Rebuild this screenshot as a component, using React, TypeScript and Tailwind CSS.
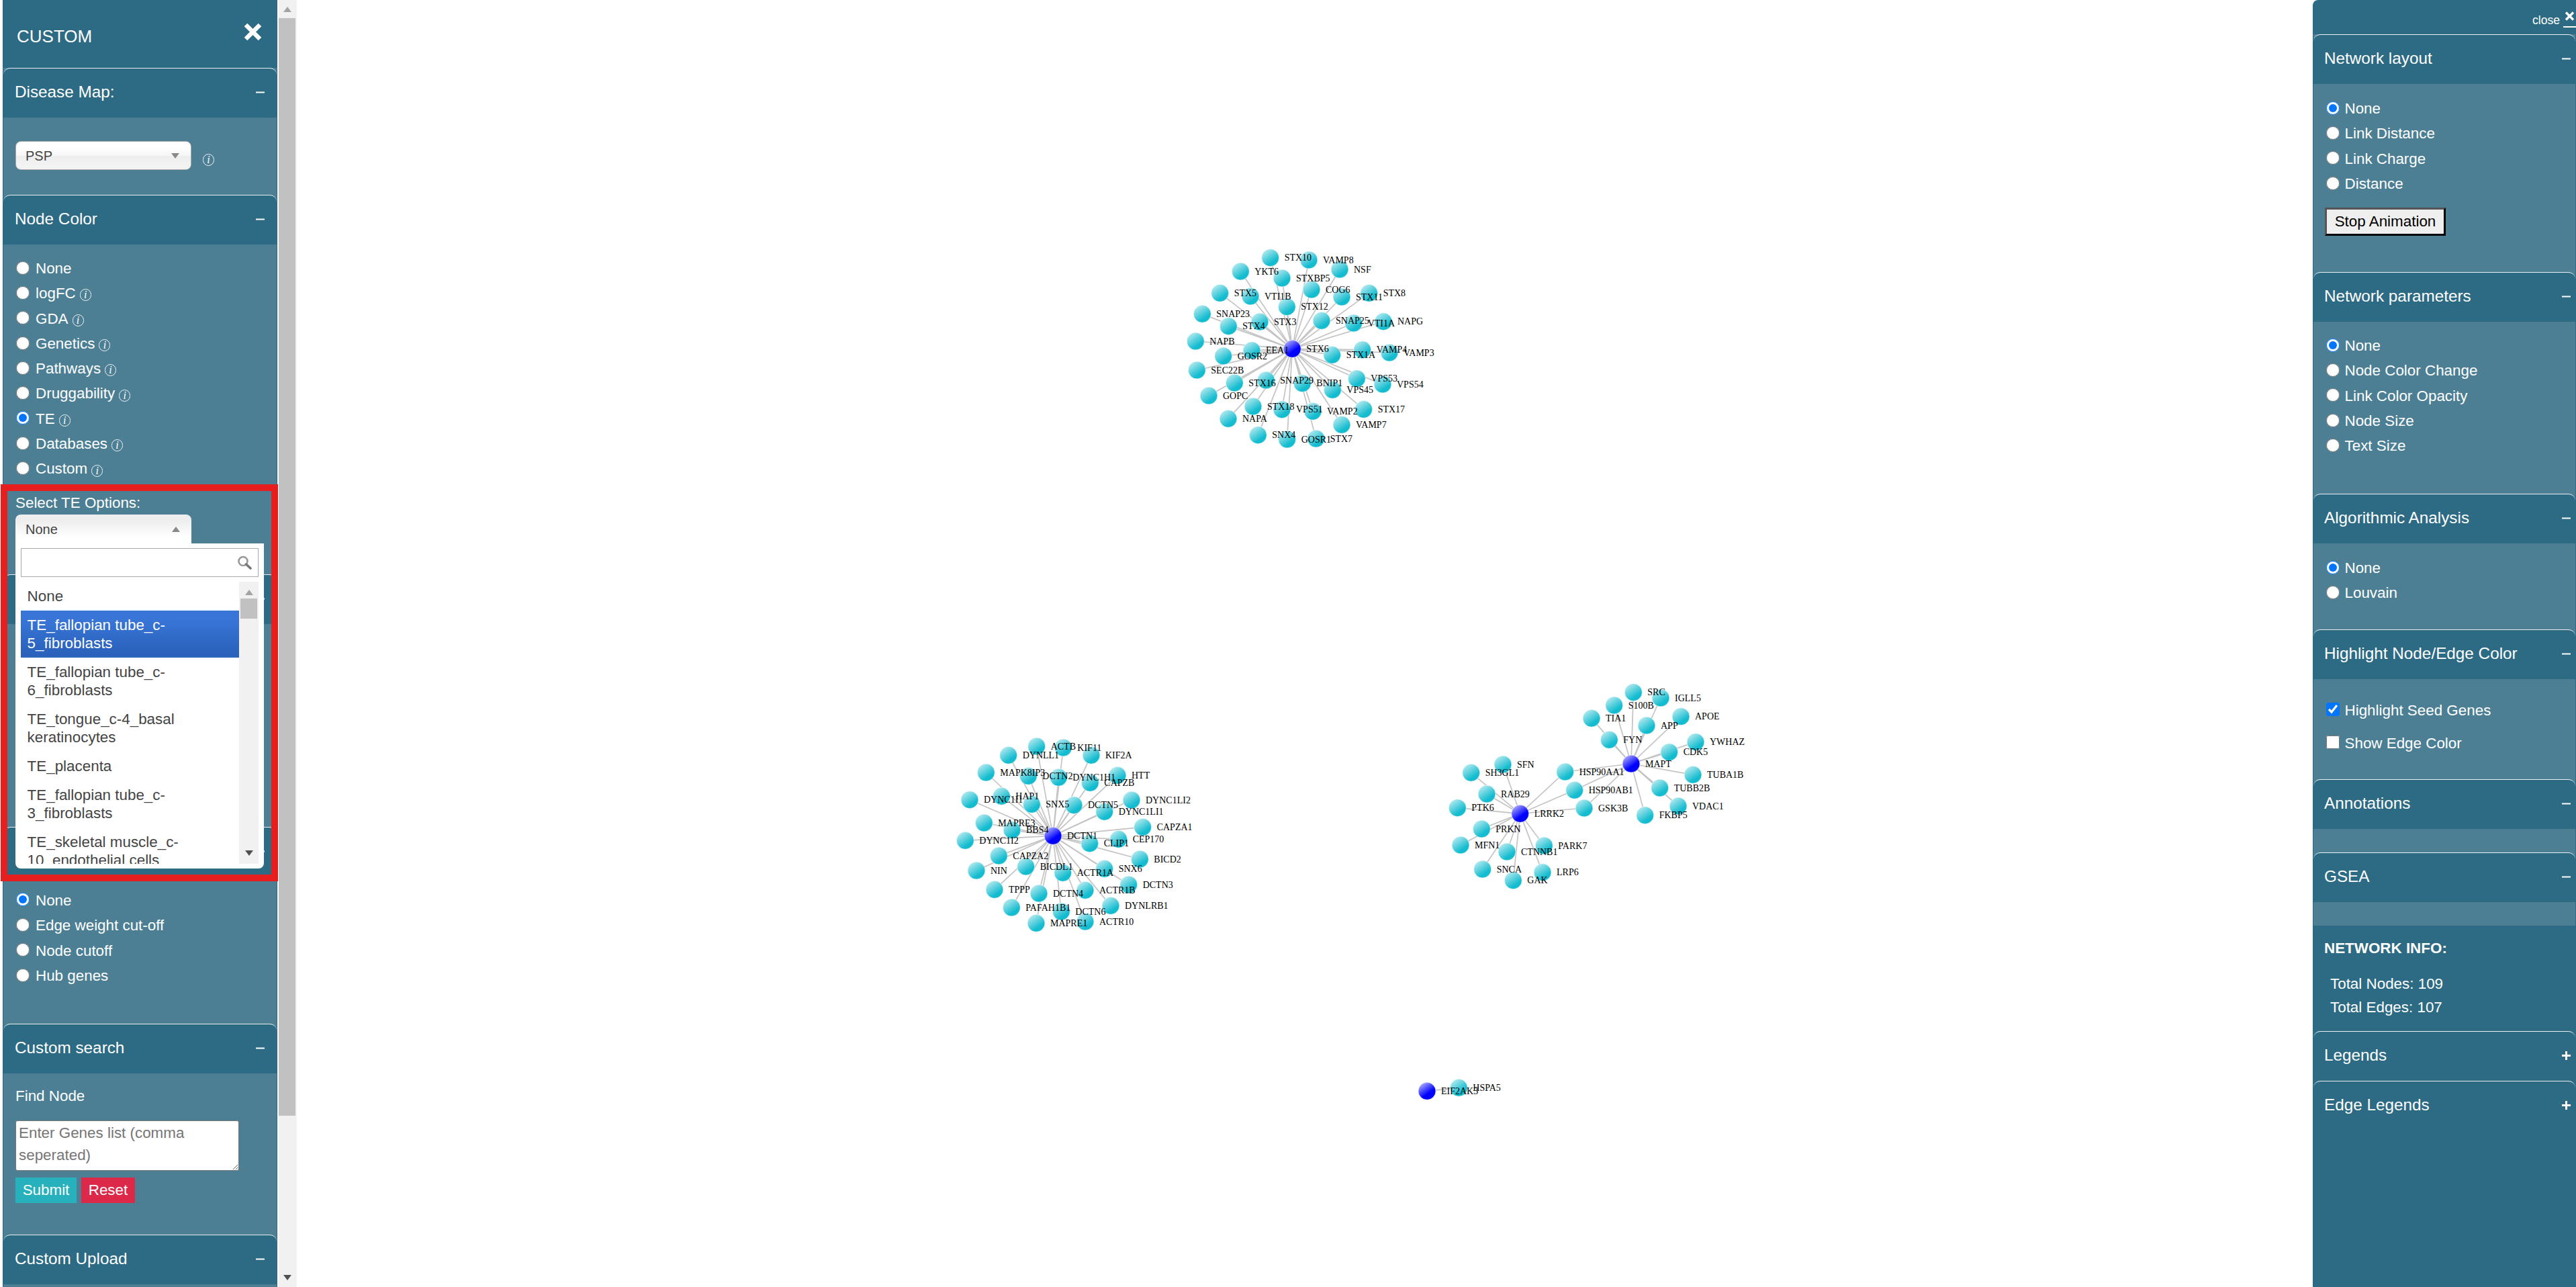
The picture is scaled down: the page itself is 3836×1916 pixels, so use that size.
import { useId } from "react";

const bgHead = "bg-[#2d6b84]";

type GraphNode = [number, number, string, number];

// coords are measured at 3x, hub column: 0 / 1 = which hub, 2 = both
const clusters: { ox: number; oy: number; hubs: [number, number, string][]; nodes: GraphNode[] }[] = [
  {
    ox: 1740,
    oy: 340,
    hubs: [[553, 538, "STX6"]],
    nodes: [
      [455, 131, "STX10", 0], [627, 141, "VAMP8", 0], [765, 183, "NSF", 0], [322, 192, "YKT6", 0],
      [507, 222, "STXBP5", 0], [639, 273, "COG6", 0], [896, 289, "STX8", 0], [230, 289, "STX5", 0],
      [366, 303, "VTI1B", 0], [774, 306, "STX11", 0], [529, 350, "STX12", 0], [151, 382, "SNAP23", 0],
      [408, 417, "STX3", 0], [268, 437, "STX4", 0], [684, 412, "SNAP25", 0], [827, 423, "VTI1A", 0],
      [960, 416, "NAPG", 0], [121, 504, "NAPB", 0], [372, 545, "EEA1", 0], [245, 570, "GOSR2", 0],
      [731, 565, "STX1A", 0], [866, 542, "VAMP4", 0], [987, 555, "VAMP3", 0], [127, 633, "SEC22B", 0],
      [295, 690, "STX16", 0], [436, 678, "SNAP29", 0], [180, 747, "GOPC", 0], [598, 692, "BNIP1", 0],
      [841, 671, "VPS53", 0], [957, 696, "VPS54", 0], [733, 721, "VPS45", 0], [378, 795, "STX18", 0],
      [507, 809, "VPS51", 0], [645, 817, "VAMP2", 0], [872, 808, "STX17", 0], [774, 877, "VAMP7", 0],
      [267, 850, "NAPA", 0], [400, 923, "SNX4", 0], [530, 942, "GOSR1", 0], [659, 939, "STX7", 0],
    ],
  },
  {
    ox: 1400,
    oy: 1070,
    hubs: [[504, 523, "DCTN1"]],
    nodes: [
      [431, 123, "ACTB", 0], [550, 129, "KIF11", 0], [675, 163, "KIF2A", 0], [305, 163, "DYNLL1", 0],
      [205, 240, "MAPK8IP3", 0], [394, 256, "DCTN2", 0], [529, 262, "DYNC1H1", 0], [670, 286, "CAPZB", 0],
      [792, 253, "HTT", 0], [132, 362, "DYNC1I1", 0], [274, 346, "HAP1", 0], [409, 382, "SNX5", 0],
      [855, 363, "DYNC1LI2", 0], [597, 386, "DCTN5", 0], [734, 415, "DYNC1LI1", 0], [196, 465, "MAPRE3", 0],
      [321, 497, "BBS4", 0], [905, 484, "CAPZA1", 0], [797, 538, "CEP170", 0], [668, 557, "CLIP1", 0],
      [112, 544, "DYNC1I2", 0], [892, 627, "BICD2", 0], [262, 612, "CAPZA2", 0], [383, 660, "BICDL1", 0],
      [548, 688, "ACTR1A", 0], [734, 670, "SNX6", 0], [162, 678, "NIN", 0], [243, 763, "TPPP", 0],
      [648, 766, "ACTR1B", 0], [842, 741, "DCTN3", 0], [441, 780, "DCTN4", 0], [319, 843, "PAFAH1B1", 0],
      [762, 835, "DYNLRB1", 0], [541, 861, "DCTN6", 0], [648, 906, "ACTR10", 0], [429, 913, "MAPRE1", 0],
    ],
  },
  {
    ox: 2130,
    oy: 1000,
    hubs: [[897, 411, "MAPT"], [401, 634, "LRRK2"]],
    nodes: [
      [907, 92, "SRC", 0], [1029, 117, "IGLL5", 0], [821, 150, "S100B", 0], [1119, 200, "APOE", 0],
      [720, 208, "TIA1", 0], [966, 240, "APP", 0], [799, 304, "FYN", 0], [1185, 314, "YWHAZ", 0],
      [1067, 359, "CDK5", 0], [1173, 460, "TUBA1B", 0], [1025, 519, "TUBB2B", 0], [1107, 600, "VDAC1", 0],
      [959, 641, "FKBP5", 0], [602, 447, "HSP90AA1", 2], [644, 529, "HSP90AB1", 2], [687, 609, "GSK3B", 2],
      [324, 414, "SFN", 1], [182, 451, "SH3GL1", 1], [252, 546, "RAB29", 1], [121, 608, "PTK6", 1],
      [229, 702, "PRKN", 1], [135, 774, "MFN1", 1], [342, 804, "CTNNB1", 1], [508, 777, "PARK7", 1],
      [233, 882, "SNCA", 1], [501, 896, "LRP6", 1], [370, 932, "GAK", 1],
    ],
  },
  {
    ox: 2080,
    oy: 1580,
    hubs: [[135, 133, "EIF2AK3"]],
    nodes: [[277, 118, "HSPA5", 0]],
  },
];

function Graph() {
  return (
    <svg className="absolute left-0 top-0 h-full w-full" xmlns="http://www.w3.org/2000/svg">
      <defs>
        <linearGradient id="teal" x1="0.1" y1="0" x2="0.8" y2="1">
          <stop offset="0%" stopColor="#c9f0f4" />
          <stop offset="75%" stopColor="#14bccf" />
        </linearGradient>
        <linearGradient id="blue" x1="0.1" y1="0" x2="0.8" y2="1">
          <stop offset="0%" stopColor="#c4c4ff" />
          <stop offset="65%" stopColor="#0000ff" />
        </linearGradient>
      </defs>
      <g transform="translate(-442 0)">
        {clusters.map((c) => {
          const px = (v: number) => c.ox + v / 3;
          const py = (v: number) => c.oy + v / 3;
          return (
            <g key={c.ox}>
              {c.nodes.map(([x, y, name, hub]) =>
                c.hubs
                  .filter((_, i) => hub === 2 || hub === i)
                  .map((h) => (
                    <line
                      key={name + h[2]}
                      x1={px(h[0])}
                      y1={py(h[1])}
                      x2={px(x)}
                      y2={py(y)}
                      stroke="#c4c4c4"
                      strokeWidth={1.7}
                    />
                  ))
              )}
              {c.nodes.map(([x, y, name]) => (
                <circle key={name} cx={px(x)} cy={py(y)} r={13} fill="url(#teal)" stroke="#fff" strokeWidth={0.6} />
              ))}
              {c.hubs.map(([x, y, name]) => (
                <circle key={name} cx={px(x)} cy={py(y)} r={13} fill="url(#blue)" stroke="#fff" strokeWidth={0.6} />
              ))}
              {[...c.nodes, ...c.hubs].map((n) => (
                <text
                  key={n[2]}
                  x={px(n[0]) + 21}
                  y={py(n[1])}
                  dominantBaseline="central"
                  className="fill-black font-['Liberation_Serif',serif] text-[14px]"
                >
                  {n[2]}
                </text>
              ))}
            </g>
          );
        })}
      </g>
    </svg>
  );
}

function Sign({ plus }: { plus?: boolean }) {
  return (
    <svg width="13" height="13" viewBox="0 0 13 13" className="shrink-0">
      <rect x="0" y={plus ? 5 : 5.5} width="13" height={plus ? 3 : 2} fill="#fff" />
      {plus && <rect x="5" y="0" width="3" height="13" fill="#fff" />}
    </svg>
  );
}

function Section({
  title,
  plus,
  pad = "pl-[17px] pr-[18px]",
  children,
}: {
  title: string;
  plus?: boolean;
  pad?: string;
  children?: React.ReactNode;
}) {
  return (
    <div className="border-x border-[#2d6b84]">
      <div
        className={`flex h-[74px] items-center justify-between rounded-t-[10px] border-t border-white/90 pb-[2px] text-[24.3px] text-white ${bgHead} ${pad}`}
      >
        <span>{title}</span>
        <Sign plus={plus} />
      </div>
      {children}
    </div>
  );
}

function Info() {
  return (
    <span className="inline-flex h-[18px] w-[17px] translate-y-[2px] items-center justify-center rounded-full border border-white/90 font-['Liberation_Serif',serif] text-[16px] italic leading-none text-white">
      i
    </span>
  );
}

function Radio({
  label,
  checked,
  info,
  row = "h-[37.3px]",
  gap = "gap-[9px]",
}: {
  label: string;
  checked?: boolean;
  info?: boolean;
  row?: string;
  gap?: string;
}) {
  const id = useId();
  return (
    <label className={`flex items-center text-[22.4px] leading-none text-white ${row} ${gap}`}>
      <input type="radio" defaultChecked={checked} name={id} className="m-0 -mt-[3px] size-5 shrink-0" />
      <span>{label}</span>
      {info && (
        <span className="-ml-[3px] flex">
          <Info />
        </span>
      )}
    </label>
  );
}

function Caret({ up, color = "#888" }: { up?: boolean; color?: string }) {
  return (
    <svg width="12" height="8" viewBox="0 0 12 8" className="shrink-0">
      <polygon points={up ? "0,8 12,8 6,0" : "0,0 12,0 6,8"} fill={color} />
    </svg>
  );
}

const teItems: [string, boolean?][] = [
  ["None"],
  ["TE_fallopian tube_c-5_fibroblasts", true],
  ["TE_fallopian tube_c-6_fibroblasts"],
  ["TE_tongue_c-4_basal keratinocytes"],
  ["TE_placenta"],
  ["TE_fallopian tube_c-3_fibroblasts"],
  ["TE_skeletal muscle_c-10_endothelial cells"],
];

function TeDropdown() {
  return (
    <div className="absolute left-[23px] top-[809px] z-10 h-[484px] w-[370px] rounded-b-[8px] bg-white px-2 pt-[7px]">
      <div className="flex h-[43px] items-center justify-end border border-[#aaa] pr-[9px]">
        <svg width="22" height="21" viewBox="0 0 22 21">
          <circle cx="9" cy="8.5" r="6.5" fill="none" stroke="#999" strokeWidth="2.6" />
          <line x1="13.5" y1="13" x2="20" y2="19" stroke="#777" strokeWidth="3.6" strokeLinecap="round" />
        </svg>
      </div>
      <div className="mt-[7px] flex h-[420px]">
        <div className="flex-1 overflow-hidden text-[22.4px] leading-[27px] text-[#444]">
          {teItems.map(([text, selected]) => (
            <div
              key={text}
              className={`px-[9.6px] py-2 ${
                selected ? "bg-[linear-gradient(#3875d7_20%,#2a62bc_90%)] text-white" : ""
              }`}
            >
              {text}
            </div>
          ))}
        </div>
        <div className="flex w-[29px] flex-col items-center bg-[#f1f1f1] pt-[12px]">
          <Caret up color="#a3a3a3" />
          <div className="mt-[5px] h-[30px] w-[25px] bg-[#c1c1c1]" />
          <div className="mb-[12px] mt-auto">
            <Caret color="#505050" />
          </div>
        </div>
      </div>
    </div>
  );
}

function LeftSidebar() {
  return (
    <div className="relative w-[415px] shrink-0">
      <div className="ml-1 h-full w-[409px] overflow-hidden bg-[#4c7f94]">
        <div className={`flex h-[101px] items-center justify-between pl-[21px] pr-[23px] pt-[7px] ${bgHead}`}>
          <span className="text-[26px] text-white">CUSTOM</span>
          <svg width="27" height="27" viewBox="0 0 27 27" className="-mt-[13px]">
            <path d="M3 3 L24 24 M24 3 L3 24" stroke="#fff" strokeWidth="6.5" />
          </svg>
        </div>

        <Section title="Disease Map:">
          <div className="flex h-[115px] items-start pl-[18px] pt-[35px]">
            <div className="flex h-[43px] w-[262px] items-center justify-between rounded-[8px] border border-[#aaa] bg-[linear-gradient(#fff_20%,#f6f6f6_50%,#eee_52%,#f4f4f4_100%)] pl-[14px] pr-[17px] text-[20px] text-[#444]">
              PSP
              <Caret />
            </div>
            <span className="ml-[17px] mt-[17px] flex">
              <Info />
            </span>
          </div>
        </Section>

        <Section title="Node Color">
          <div className="h-[491px] pl-[19px] pt-[17.5px]">
            <Radio label="None" />
            <Radio label="logFC" info />
            <Radio label="GDA" info />
            <Radio label="Genetics" info />
            <Radio label="Pathways" info />
            <Radio label="Druggability" info />
            <Radio label="TE" info checked />
            <Radio label="Databases" info />
            <Radio label="Custom" info />
            <div className="-ml-px mt-[17.5px] text-[22.4px] leading-[27px] text-white">Select TE Options:</div>
            <div className="relative z-20 -ml-px mt-[4px] flex h-[44px] w-[262px] items-center justify-between rounded-t-[8px] bg-[linear-gradient(#eee_20%,#fff_80%)] pl-[15px] pr-[17px] text-[20px] text-[#444]">
              None
              <Caret up />
            </div>
          </div>
        </Section>

        <Section title="">
          <div className="h-[302px]" />
        </Section>

        <Section title="">
          <div className="h-[219px] pl-[19px] pt-[17px]">
            <Radio label="None" checked row="h-[37.6px]" />
            <Radio label="Edge weight cut-off" row="h-[37.6px]" />
            <Radio label="Node cutoff" row="h-[37.6px]" />
            <Radio label="Hub genes" row="h-[37.6px]" />
          </div>
        </Section>

        <Section title="Custom search">
          <div className="h-[240px] pl-[18px] pt-[20px]">
            <div className="text-[22.4px] leading-[27px] text-white">Find Node</div>
            <textarea
              placeholder="Enter Genes list (comma seperated)"
              className="mt-[22.5px] block h-[75px] w-[333px] rounded-[3px] border border-[#767676] bg-white px-[4px] py-px text-[22.4px] leading-[33.6px] text-black placeholder:text-[#757575]"
            />
            <div className="mt-[10px] flex gap-[7px]">
              <button className="h-[38px] w-[91px] bg-[#26b1bc] text-[22.4px] text-white">Submit</button>
              <button className="h-[38px] w-[80px] bg-[#dc2849] text-[22.4px] text-white">Reset</button>
            </div>
          </div>
        </Section>

        <Section title="Custom Upload">
          <div className="h-[40px]" />
        </Section>
      </div>

      <TeDropdown />
      <div className="pointer-events-none absolute left-[1px] top-[721px] z-30 h-[591px] w-[413px] border-[10px] border-[#e61e1e]" />
    </div>
  );
}

function PageScrollbar() {
  return (
    <div className="flex w-[27px] shrink-0 flex-col bg-[#f1f1f1]">
      <div className="flex h-[27px] w-[25px] items-center justify-center">
        <Caret up color="#a3a3a3" />
      </div>
      <div className="h-[1634px] w-[25px] bg-[#c1c1c1]" />
      <div className="mt-auto flex h-[18px] w-[25px] justify-center">
        <Caret color="#505050" />
      </div>
    </div>
  );
}

function RightPanel() {
  const pad = "pl-[16px] pr-[7px]";
  const gap = "gap-[7.5px]";
  return (
    <div className={`h-full w-[392px] shrink-0 overflow-hidden rounded-tl-[8px] ${bgHead}`}>
      <div className="flex h-[51px] items-start justify-end gap-[5px] pt-[17px] text-white">
        <span className="mt-[3px] text-[17.6px] leading-[21px]">close</span>
        <div className="flex h-[24px] w-[19px] justify-center border-b-2 border-white">
          <svg width="15" height="14" viewBox="0 0 15 14">
            <path d="M2 1.5 L13 12.5 M13 1.5 L2 12.5" stroke="#fff" strokeWidth="3.4" />
          </svg>
        </div>
      </div>

      <div className="bg-[#4c7f94]">
        <Section title="Network layout" pad={pad}>
          <div className="h-[280px] pl-[19px] pt-[18.5px]">
            <Radio label="None" checked gap={gap} />
            <Radio label="Link Distance" gap={gap} />
            <Radio label="Link Charge" gap={gap} />
            <Radio label="Distance" gap={gap} />
            <button className="-ml-[2px] mt-[16.5px] h-[42px] w-[180px] border-[3px] border-[#555] border-b-black border-r-black bg-[#efefef] text-[22.4px] text-black">
              Stop Animation
            </button>
          </div>
        </Section>

        <Section title="Network parameters" pad={pad}>
          <div className="h-[256px] pl-[19px] pt-[17.5px]">
            <Radio label="None" checked gap={gap} />
            <Radio label="Node Color Change" gap={gap} />
            <Radio label="Link Color Opacity" gap={gap} />
            <Radio label="Node Size" gap={gap} />
            <Radio label="Text Size" gap={gap} />
          </div>
        </Section>

        <Section title="Algorithmic Analysis" pad={pad}>
          <div className="h-[128px] pl-[19px] pt-[18.5px]">
            <Radio label="None" checked gap={gap} />
            <Radio label="Louvain" gap={gap} />
          </div>
        </Section>

        <Section title="Highlight Node/Edge Color" pad={pad}>
          <div className="h-[149px] pl-[19px] pt-[22px] text-[22.4px] text-white">
            <label className="flex h-[49px] items-center gap-[7.5px]">
              <input type="checkbox" defaultChecked className="m-0 -mt-[3px] size-5 shrink-0" />
              Highlight Seed Genes
            </label>
            <label className="flex h-[49px] items-center gap-[7.5px]">
              <input type="checkbox" className="m-0 -mt-[3px] size-5 shrink-0" />
              Show Edge Color
            </label>
          </div>
        </Section>

        <Section title="Annotations" pad={pad}>
          <div className="h-[35px]" />
        </Section>

        <Section title="GSEA" pad={pad}>
          <div className="h-[35px]" />
        </Section>
      </div>

      <div className="h-[157px] pl-[17px] pt-[20px] text-[22.4px] text-white">
        <div className="font-bold leading-[27px]">NETWORK INFO:</div>
        <div className="mt-[21.5px] pl-[9px] leading-[35px]">
          <div>Total Nodes: 109</div>
          <div>Total Edges: 107</div>
        </div>
      </div>

      <Section title="Legends" plus pad={pad} />
      <Section title="Edge Legends" plus pad={pad} />
    </div>
  );
}

export default function App() {
  return (
    <div className="flex h-screen w-screen overflow-hidden bg-white font-['Liberation_Sans',Arial,sans-serif]">
      <LeftSidebar />
      <PageScrollbar />
      <main className="relative flex-1 overflow-hidden">
        <Graph />
      </main>
      <RightPanel />
    </div>
  );
}
